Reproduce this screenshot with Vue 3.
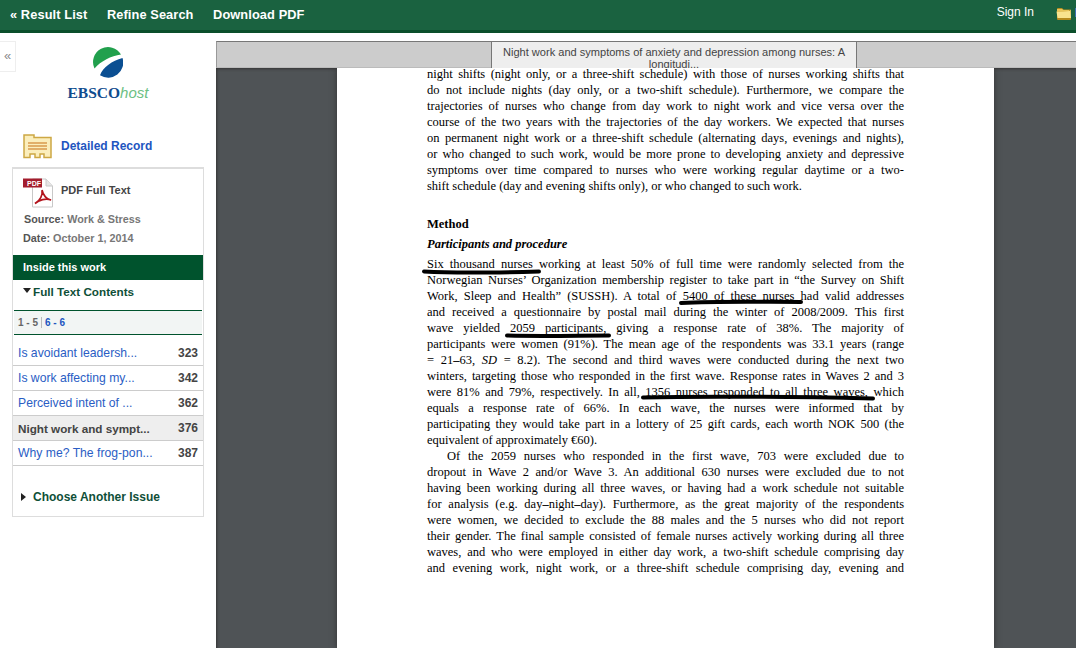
<script setup>
const top1 = [
  'night shifts (night only, or a three-shift schedule) with those of nurses working shifts that',
  'do not include nights (day only, or a two-shift schedule). Furthermore, we compare the',
  'trajectories of nurses who change from day work to night work and vice versa over the',
  'course of the two years with the trajectories of the day workers. We expected that nurses',
  'on permanent night work or a three-shift schedule (alternating days, evenings and nights),',
  'or who changed to such work, would be more prone to developing anxiety and depressive',
  'symptoms over time compared to nurses who were working regular daytime or a two-',
]
const para2 = [
  'Six thousand nurses working at least 50% of full time were randomly selected from the',
  'Norwegian Nurses’ Organization membership register to take part in “the Survey on Shift',
  'Work, Sleep and Health” (SUSSH). A total of 5400 of these nurses had valid addresses',
  'and received a questionnaire by postal mail during the winter of 2008/2009. This first',
  'wave yielded 2059 participants, giving a response rate of 38%. The majority of',
  'participants were women (91%). The mean age of the respondents was 33.1 years (range',
]
const para3 = [
  'winters, targeting those who responded in the first wave. Response rates in Waves 2 and 3',
  'were 81% and 79%, respectively. In all, 1356 nurses responded to all three waves, which',
  'equals a response rate of 66%. In each wave, the nurses were informed that by',
  'participating they would take part in a lottery of 25 gift cards, each worth NOK 500 (the',
]
const para4 = [
  'dropout in Wave 2 and/or Wave 3. An additional 630 nurses were excluded due to not',
  'having been working during all three waves, or having had a work schedule not suitable',
]
const para5 = [
  'were women, we decided to exclude the 88 males and the 5 nurses who did not report',
  'their gender. The final sample consisted of female nurses actively working during all three',
  'waves, and who were employed in either day work, a two-shift schedule comprising day',
  'and evening work, night work, or a three-shift schedule comprising day, evening and',
]
const toc = [
  { t: 'Is avoidant leadersh...', p: 323 },
  { t: 'Is work affecting my...', p: 342 },
  { t: 'Perceived intent of ...', p: 362 },
  { t: 'Night work and sympt...', p: 376, cur: true },
  { t: 'Why me? The frog-pon...', p: 387 },
]
const marks = [
  { d: 'M424 271.500 C 460 273.500 500 272.500 539 271.500' },
  { d: 'M681 303 C 720 301 760 302 801 302' },
  { d: 'M507 335.500 C 540 336.500 580 335.500 609 335.500' },
  { d: 'M643 397.500 C 700 396 800 397 873 398.500' },
]
</script>

<template>
  <div class="app">
    <header class="topbar">
      <nav class="nav">
        <a>« Result List</a>
        <a>Refine Search</a>
        <a>Download PDF</a>
      </nav>
      <div class="user">
        <span class="signin">Sign In</span>
        <svg class="fold" width="16" height="13" viewBox="0 0 16 13">
          <path d="M1 2 Q1 1 2 1 H6 L7.500 2.500 H14 Q15 2.500 15 3.500 V12 Q15 13 14 13 H2 Q1 13 1 12 Z" fill="#b58a1e"/>
          <path d="M0.500 4.500 L13.500 4 L14.500 2.500 L15 11 H1.500 Z" fill="#f9e38e"/>
          <path d="M1 2 H6 L7.500 3 H13 L13 4 L1 5 Z" fill="#e9c55b"/>
        </svg>
      </div>
      <span class="sliver"></span>
    </header>
    <div class="main">
      <aside class="side">
        <div class="collapse">«</div>
        <div class="logo">
          <svg width="30" height="31" viewBox="0 0 30 30">
            <path d="M1.500 21 A15 15 0 0 1 28 7 C 18 8.500 8 13.500 1.500 21 Z" fill="#21a04d"/>
            <path d="M29.500 10.500 A15 15 0 0 1 7 27.700 C 10 20 19 13 29.500 10.500 Z" fill="#0b4f92"/>
          </svg>
          <div class="wordmark"><b>EBSCO</b><i>host</i></div>
        </div>
        <div class="detail">
          <svg width="29" height="25" viewBox="0 0 29 25">
            <path d="M1 1 H11 V3.500 H28 V23.500 H21 V20 H17 V23.500 H12 V20 H7 V23.500 H1 Z" fill="#fbeebc" stroke="#cda844" stroke-width="1.500"/>
            <path d="M5 9 H24 M5 12 H24 M5 15 H24" stroke="#d99a4e" stroke-width="1.500"/>
          </svg>
          <a>Detailed Record</a>
        </div>
        <section class="box">
          <div class="pdf">
            <svg width="30" height="30" viewBox="0 0 30 30">
              <path d="M9.500 1 H23 L29.500 8 V29 H9.500 Z" fill="#fff" stroke="#c8c8c8"/>
              <path d="M23 1 V8 H29.500" fill="#e6e6e6" stroke="#c8c8c8"/>
              <rect x="0" y="0.500" width="19" height="9" fill="#a31d2d"/>
              <text x="4" y="8" class="pdfword">PDF</text>
              <path d="M12 25.500 C 17 23 20 17 19 12 C 20 17 24 22 28 22 C 23 20 16 22 12 25.500 Z" fill="none" stroke="#b3141d" stroke-width="1.700"/>
            </svg>
            <span>PDF Full Text</span>
          </div>
          <p class="meta src"><b>Source:</b> Work &amp; Stress</p>
          <p class="meta date"><b>Date:</b> October 1, 2014</p>
          <h3 class="inside">Inside this work</h3>
          <div class="ftc"><span class="down"></span>Full Text Contents</div>
          <div class="pager"><span class="cur">1 - 5</span><span class="sep"></span><a>6 - 6</a></div>
          <ul class="toc">
            <li v-for="r in toc" :key="r.p" :class="{ on: r.cur }"><a>{{ r.t }}</a><span>{{ r.p }}</span></li>
          </ul>
          <div class="another"><span class="right"></span>Choose Another Issue</div>
        </section>
      </aside>
      <section class="viewer">
        <div class="vhead">
          <div class="vtab">Night work and symptoms of anxiety and depression among nurses: A longitudi...</div>
        </div>
        <div class="stage">
          <article class="page">
            <div class="text">
              <div v-for="l in top1" :key="l" class="ln">{{ l }}</div>
              <div class="ln last">shift schedule (day and evening shifts only), or who changed to such work.</div>
              <h4 class="method">Method</h4>
              <h5 class="sub">Participants and procedure</h5>
              <div v-for="l in para2" :key="l" class="ln">{{ l }}</div>
              <div class="ln">= 21<b>–</b>63, <i>SD</i> = 8.2). The second and third waves were conducted during the next two</div>
              <div v-for="l in para3" :key="l" class="ln">{{ l }}</div>
              <div class="ln last">equivalent of approximately €60).</div>
              <div class="ln indent">Of the 2059 nurses who responded in the first wave, 703 were excluded due to</div>
              <div v-for="l in para4" :key="l" class="ln">{{ l }}</div>
              <div class="ln">for analysis (e.g. day<b>–</b>night<b>–</b>day). Furthermore, as the great majority of the respondents</div>
              <div v-for="l in para5" :key="l" class="ln">{{ l }}</div>
            </div>
          </article>
          <svg class="ink" width="1076" height="648" viewBox="0 0 1076 648">
            <path v-for="m in marks" :key="m.d" :d="m.d" fill="none" stroke="#000" stroke-width="4" stroke-linecap="round"/>
          </svg>
        </div>
      </section>
    </div>
  </div>
</template>

<style>
html, body { margin: 0; overflow: hidden; background: #fff; }
</style>

<style scoped>
.app { width: 1076px; height: 648px; overflow: hidden; display: flex; flex-direction: column; font-family: "Liberation Sans", Arial, sans-serif; background: #fff; }
.topbar { height: 30px; flex: none; background: #1a6240; border-bottom: 3px solid #0b4f2b; display: flex; align-items: center; justify-content: space-between; padding: 0 4px 0 10px; color: #fff; position: relative; }
.nav { display: flex; gap: 19.500px; font-weight: bold; font-size: 12.800px; letter-spacing: .1px; padding-bottom: 2px; }
.user { display: flex; align-items: center; gap: 22px; padding-bottom: 3px; }
.signin { font-size: 12px; padding-bottom: 3px; }
.fold { display: block; }
.sliver { position: absolute; right: 0; top: 8px; width: 1px; height: 9px; background: #3b6fb0; }
.main { flex: 1; display: flex; min-height: 0; }
.side { width: 216px; flex: none; position: relative; box-sizing: border-box; padding: 14px 12px 0; }
.collapse { position: absolute; left: -1px; top: 8px; width: 15px; height: 29px; border: 1px solid #eee; color: #8a8a8a; font-size: 13px; line-height: 27px; text-align: center; }
.logo { display: flex; flex-direction: column; align-items: center; }
.logo svg { display: block; }
.wordmark { margin-top: 5px; font-family: "Liberation Serif", serif; font-size: 15.500px; line-height: 20px; color: #0f4c8e; }
.wordmark i { font-family: "Liberation Sans", sans-serif; font-weight: normal; font-size: 15px; color: #6cc083; }
.detail { display: flex; align-items: center; gap: 9px; margin: 30px 0 0 11px; height: 26px; }
.detail svg { display: block; }
.detail a { color: #2255c0; font-size: 12px; font-weight: bold; }
.box { width: 192px; box-sizing: border-box; margin-top: 8px; border: 1px solid #ddd; border-top-width: 2px; padding-bottom: 12px; }
.pdf { display: flex; gap: 8px; padding: 9px 0 0 10px; height: 30px; font-size: 11px; font-weight: bold; color: #444; }
.pdf span { padding-top: 6px; }
.pdf svg { display: block; }
.pdfword { font: bold 7px "Liberation Sans", sans-serif; fill: #fff; }
.meta { margin: 0; font-size: 10.800px; font-weight: bold; color: #777; }
.meta b { color: #555; }
.src { margin: 4px 0 0 11px; line-height: 14px; }
.date { margin: 5px 0 0 10px; line-height: 14px; }
.inside { margin: 10px 0 0; height: 25px; background: #00532d; color: #fff; font-size: 11px; font-weight: bold; line-height: 24px; padding-left: 10px; }
.ftc { height: 30px; padding-left: 10px; font-size: 11.700px; font-weight: bold; color: #0f4f38; line-height: 24px; display: flex; align-items: flex-start; gap: 2px; }
.down { display: inline-block; margin-top: 8px; border-left: 4px solid transparent; border-right: 4px solid transparent; border-top: 5px solid #222; }
.pager { margin: 0 1px; height: 23px; background: #f2f5f4; border-top: 1px solid #00532d; border-bottom: 1px solid #00532d; font-size: 10px; font-weight: bold; color: #666; display: flex; align-items: center; padding-left: 4px; }
.sep { width: 1px; height: 11px; background: #bbb; margin: 0 3px; }
.pager a { color: #2255c0; }
.toc { list-style: none; margin: 6px 0 0; padding: 0; }
.toc li { height: 24px; border-bottom: 1px solid #ccc; display: flex; justify-content: space-between; align-items: center; padding: 0 5px; font-size: 12.200px; }
.toc a { color: #2a5dc4; }
.toc span { color: #444; font-weight: bold; font-size: 12px; }
.toc .on { background: #eee; }
.toc .on a { color: #444; font-weight: bold; font-size: 11.700px; }
.another { margin: 24px 0 0 8px; display: flex; align-items: center; gap: 7px; font-size: 12px; font-weight: bold; color: #0f4f38; }
.right { border-top: 4px solid transparent; border-bottom: 4px solid transparent; border-left: 5px solid #222; }
.viewer { flex: 1; display: flex; flex-direction: column; margin-top: 8px; min-width: 0; position: relative; }
.vhead { height: 25px; flex: none; background: #ccc; border-top: 1px solid #777; border-left: 1px solid #999; border-bottom: 1px solid #bbb; position: relative; z-index: 3; }
.vtab { position: absolute; left: 274px; top: 0; width: 366px; height: 26px; overflow: hidden; background: #eee; border-left: 1px solid #777; border-right: 1px solid #777; text-align: center; font-size: 11.050px; line-height: 12px; color: #444; padding: 4px 6px 0; box-sizing: border-box; }
.stage { flex: 1; background: #4f5356; position: relative; box-shadow: inset 3px 3px 3px -2px #333; overflow: hidden; }
.page { display: flow-root; width: 657px; height: 100%; margin-left: 121px; background: #fff; box-shadow: 0 0 6px #333; box-sizing: border-box; padding: 0 90px; }
.text { font-family: "Liberation Serif", serif; font-size: 12.500px; line-height: 16px; color: #000; margin-top: -2px; }
.ln { white-space: nowrap; text-align: justify; text-align-last: justify; width: 477px; }
.ln.last { text-align-last: left; }
.indent { padding-left: 20px; box-sizing: border-box; }
.method { margin: 22px 0 0; font-size: 12.500px; line-height: 16px; font-weight: bold; }
.sub { margin: 4px 0 4px; font-size: 12.500px; line-height: 16px; font-weight: bold; font-style: italic; }
.ink { position: absolute; left: -216px; top: -68px; pointer-events: none; }
</style>
